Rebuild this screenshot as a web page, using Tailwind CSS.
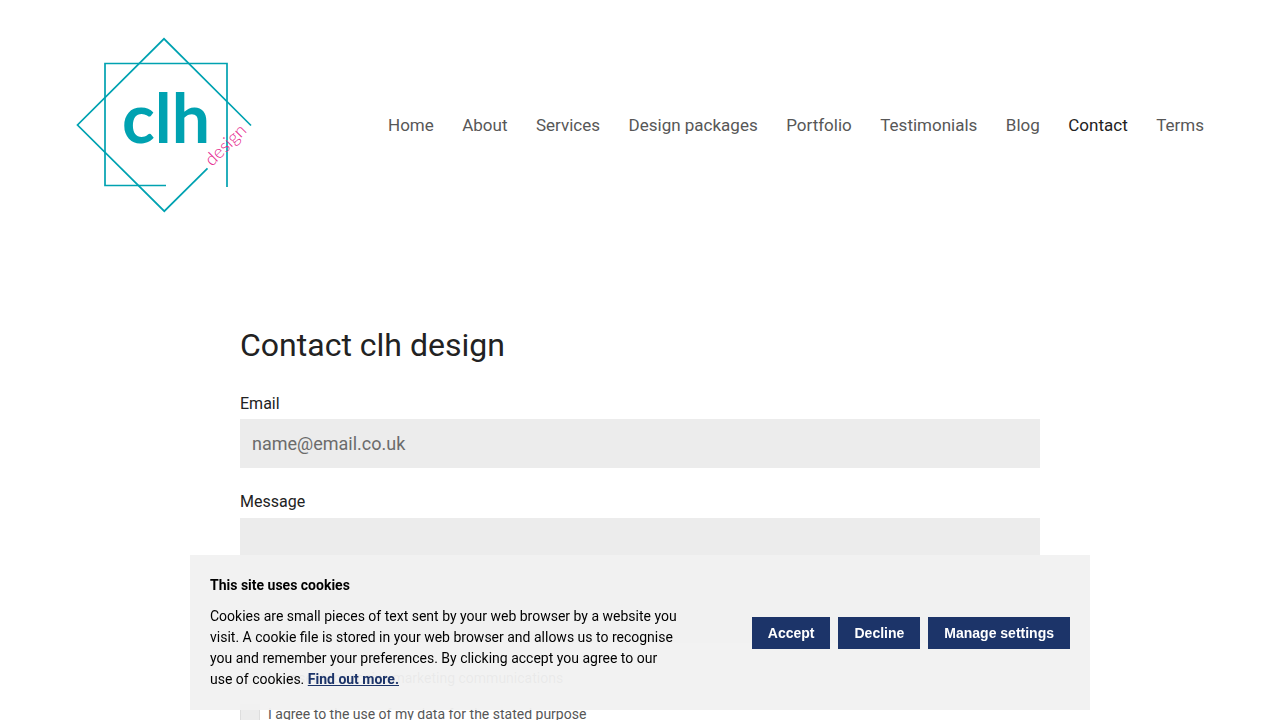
<!DOCTYPE html>
<html lang="en">
<head>
<meta charset="utf-8">
<meta name="viewport" content="width=device-width, initial-scale=1">
<title>Contact clh design</title>
<script src="https://cdn.jsdelivr.net/npm/@tailwindcss/browser@4"></script>
</head>
<body class="bg-white font-[Roboto,sans-serif] text-[#222]">
<header class="flex items-center px-[76px] py-[37px]">
  <a href="#" aria-label="clh design" class="shrink-0">
    <svg class="block h-[176px] w-[176px]" viewBox="76 37 176 176" fill="none" stroke="#00a2b1" stroke-width="1.7">
      <path d="M166 185.500H105V63.500H227V187"/>
      <path d="M251 125.500L164 38.800L77.500 125L164.300 211.200L207.500 168.300"/>
      <text x="122" y="143" font-family="Lato, sans-serif" font-weight="700" font-size="68" fill="#00a2b1" stroke="none">clh</text>
      <text transform="translate(212 167) rotate(-45)" font-family="Lato, sans-serif" font-weight="300" font-size="18" fill="#e5258c" stroke="none">design</text>
    </svg>
  </a>
  <nav class="ml-[136px] flex flex-1 justify-between text-[17px] leading-6 text-[#575757]">
    <a href="#">Home</a>
    <a href="#">About</a>
    <a href="#">Services</a>
    <a href="#">Design packages</a>
    <a href="#">Portfolio</a>
    <a href="#">Testimonials</a>
    <a href="#">Blog</a>
    <a href="#" aria-current="page" class="text-[#222]">Contact</a>
    <a href="#">Terms</a>
  </nav>
</header>
<main class="mx-auto max-w-[800px] pt-[75px] pb-20">
  <h1 class="text-[32px] leading-[40px]">Contact clh design</h1>
  <form class="pt-[27px]">
    <label for="email" class="block text-[16px] leading-6">Email</label>
    <input id="email" type="email" placeholder="name@email.co.uk" class="mt-[3px] block h-[49px] w-full bg-[#ececec] px-3 text-[18px] outline-none placeholder:text-[#6b6b6b]">
    <label for="message" class="mt-[22px] block text-[16px] leading-6">Message</label>
    <textarea id="message" class="mt-1 block h-[125px] w-full resize-none bg-[#ececec] p-3 text-[18px] outline-none"></textarea>
    <div class="mt-[25px] flex items-center gap-2 text-[14px] leading-5 text-[#575757]">
      <input id="marketing" type="checkbox" class="size-5 appearance-none border border-[#ddd] bg-[#ececec]">
      <label for="marketing">I consent to receive marketing communications</label>
    </div>
    <div class="mt-4 flex items-center gap-2 text-[14px] leading-5 text-[#575757]">
      <input id="data" type="checkbox" class="size-5 appearance-none border border-[#ddd] bg-[#ececec]">
      <label for="data">I agree to the use of my data for the stated purpose</label>
    </div>
  </form>
</main>
<section aria-label="Cookies" class="fixed inset-x-0 bottom-[10px] mx-auto flex max-w-[900px] items-center justify-between bg-[#f1f1f1]/95 p-5 text-[14px] leading-[21px] text-black">
  <div class="max-w-[472px]">
    <h2 class="font-bold">This site uses cookies</h2>
    <p class="pt-[10px]">Cookies are small pieces of text sent by your web browser by a website you visit. A cookie file is stored in your web browser and allows us to recognise you and remember your preferences. By clicking accept you agree to our use of cookies. <a href="#" class="font-bold text-[#1c3469] underline">Find out more.</a></p>
  </div>
  <div class="flex shrink-0 gap-2 font-[Liberation_Sans,Arial,sans-serif] text-[14px] font-bold leading-4 text-white">
    <button type="button" class="bg-[#1c3469] px-4 py-2">Accept</button>
    <button type="button" class="bg-[#1c3469] px-4 py-2">Decline</button>
    <button type="button" class="bg-[#1c3469] px-4 py-2">Manage settings</button>
  </div>
</section>
</body>
</html>
